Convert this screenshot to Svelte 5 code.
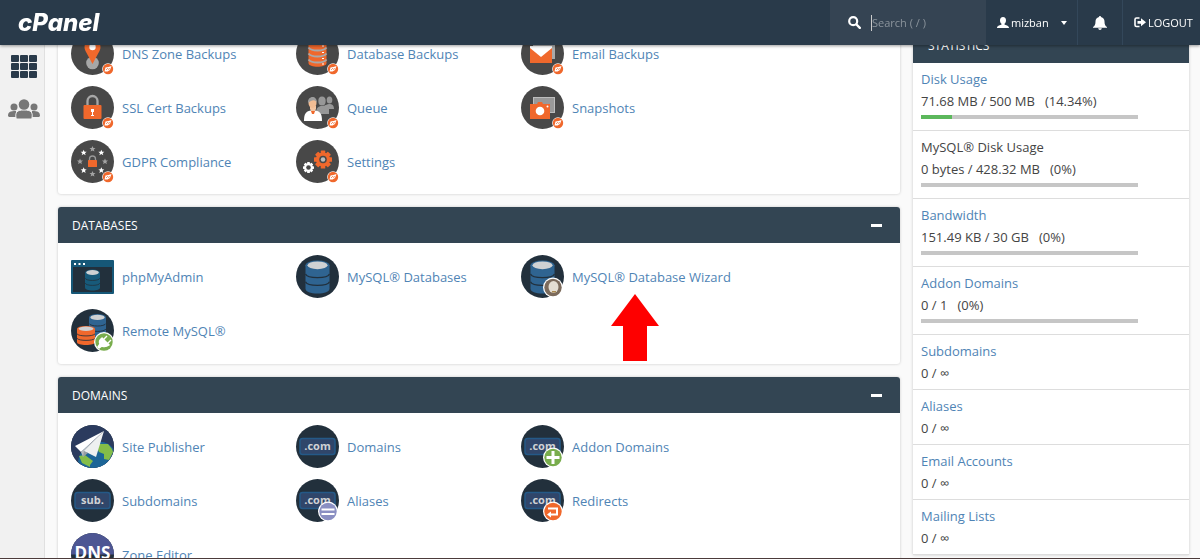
<script>
    const sections = [
        {
            title: "",
            items: [
                { label: "DNS Zone Backups", icon: "pin", jet: true },
                { label: "Database Backups", icon: "dbBackup", jet: true },
                { label: "Email Backups", icon: "mail", jet: true },
                { label: "SSL Cert Backups", icon: "lock", jet: true },
                { label: "Queue", icon: "people", jet: true },
                { label: "Snapshots", icon: "camera", jet: true },
                { label: "GDPR Compliance", icon: "gdpr", jet: true },
                { label: "Settings", icon: "gears", jet: true },
            ],
        },
        {
            title: "Databases",
            arrow: true,
            items: [
                { label: "phpMyAdmin", icon: "phpmyadmin" },
                { label: "MySQL® Databases", icon: "mysql" },
                { label: "MySQL® Database Wizard", icon: "mysql", badge: "wizard" },
                { label: "Remote MySQL®", icon: "remote" },
            ],
        },
        {
            title: "Domains",
            items: [
                { label: "Site Publisher", icon: "publisher" },
                { label: "Domains", icon: "tag", text: ".com" },
                { label: "Addon Domains", icon: "tag", text: ".com", badge: "plus" },
                { label: "Subdomains", icon: "tag", text: "sub." },
                { label: "Aliases", icon: "tag", text: ".com", badge: "equals" },
                { label: "Redirects", icon: "tag", text: ".com", badge: "redirect" },
                { label: "Zone Editor", icon: "dns" },
            ],
        },
    ];

    const stats = [
        { name: "Disk Usage", value: "71.68 MB / 500 MB", percent: 14.34 },
        { name: "MySQL® Disk Usage", value: "0 bytes / 428.32 MB", percent: 0, plain: true },
        { name: "Bandwidth", value: "151.49 KB / 30 GB", percent: 0 },
        { name: "Addon Domains", value: "0 / 1", percent: 0 },
        { name: "Subdomains", value: "0 / ∞" },
        { name: "Aliases", value: "0 / ∞" },
        { name: "Email Accounts", value: "0 / ∞" },
        { name: "Mailing Lists", value: "0 / ∞" },
    ];

    const stars = [0, 45, 90, 135, 180, 225, 270, 315];
    const teeth = [0, 45, 90, 135];

    let search = $state("");
    let collapsed = $state({});

    const toggle = (title) => {
        collapsed[title] = !collapsed[title];
    }
</script>

{#snippet cylinder(x, y, w, h, fill, line)}
    <g transform="translate({x} {y}) scale({w / 24} {h / 34})">
        <path d="M0 5v24c0 3 5 5 12 5s12-2 12-5V5z" fill={fill} />
        <ellipse cx="12" cy="5" rx="12" ry="5" fill={fill} />
        <ellipse cx="12" cy="5" rx="10" ry="4" fill="#cfd1d3" />
        <path d="M0 14c2 5 22 5 24 0M0 22c2 5 22 5 24 0" fill="none" stroke={line} stroke-width="1.3" />
    </g>
{/snippet}

{#snippet gear(x, y, r, color, hole)}
    <g transform="translate({x} {y})">
        {#each teeth as angle}
            <rect x={-r * 0.25} y={-r} width={r * 0.5} height={r * 2} rx="0.6" fill={color} transform="rotate({angle})" />
        {/each}
        <circle r={r * 0.78} fill={color} />
        <circle r={r * 0.42} fill="#484848" />
        <circle r={r * 0.25} fill={hole} />
    </g>
{/snippet}

{#snippet tile(item)}
    <svg class="tile" viewBox="0 0 43 43" aria-hidden="true">
        {#if item.jet}
            <circle cx="21.5" cy="21.5" r="21.5" fill="#484848" />
        {:else if item.icon !== "phpmyadmin"}
            <circle cx="21.5" cy="21.5" r="21.5" fill="#22303c" />
        {/if}

        {#if item.icon === "pin"}
            <circle cx="21.5" cy="31" r="6.3" fill="#a7a7a7" />
            <path d="M21.5 32l-7-13a8 8 0 1 1 14 0z" fill="#f0682c" />
            <circle cx="21.5" cy="15" r="3.2" fill="#fff" />
        {:else if item.icon === "dbBackup"}
            <path d="M12.5 10v21c0 5 18 5 18 0V10c0-4-18-4-18 0z" fill="#f0682c" />
            <path d="M12.5 15.500c3 4 15 4 18 0M12.500 21.500c3 4 15 4 18 0M12.500 27.500c3 4 15 4 18 0" fill="none" stroke="#a9a9a9" stroke-width="2" />
            <path d="M26 14h2M26 20.500h2M26 26.500h2M26 32h2" stroke="#fff" stroke-width="1.2" />
        {:else if item.icon === "mail"}
            <path d="M12 9h22v18H12z" fill="#a9a9a9" />
            <path d="M9 14h22v17H9z" fill="#f0682c" />
            <path d="M9 14h22v2l-11 9-11-9z" fill="#fff" />
        {:else if item.icon === "lock"}
            <path d="M16.500 20v-5a5 5 0 0 1 10 0v5" fill="none" stroke="#a7a7a7" stroke-width="2.300" />
            <rect x="12.500" y="19" width="18" height="14" rx="1" fill="#f0682c" />
            <path d="M20 23h3v3h-1v3h1v1h-3v-1h1v-3h-1z" fill="#fff" />
        {:else if item.icon === "people"}
            <g fill="#979797">
                <ellipse cx="26" cy="15" rx="3.700" ry="4.500" />
                <ellipse cx="33.500" cy="14" rx="2.800" ry="3.500" />
                <path d="M20 28c0-6 2-8 6-8 2 0 3-1 7-2 3 0 5 1 5 5h-5v5z" />
            </g>
            <path d="M8 35c0-8 2-10 9-11 7 1 9 3 9 11z" fill="#fff" />
            <path d="M14 23l3 5 3-5v-3h-6z" fill="#f5c6a2" />
            <ellipse cx="16.500" cy="17" rx="4" ry="5" fill="#f2bd94" />
            <path d="M12 17c-1-7 9-9 9 0-2-4-5-3-9 0z" fill="#9c9c9c" />
            <path d="M15 25h4l-1 3h-2z" fill="#f0682c" />
        {:else if item.icon === "camera"}
            <rect x="12.500" y="11.500" width="21" height="15" fill="#999" stroke="#bdbdbd" />
            <path d="M16 18l1-2h4l1 2h7v15H9V18z" fill="#f0682c" />
            <circle cx="19" cy="25" r="4.300" fill="#fff" />
            <circle cx="26.500" cy="20.500" r="1" fill="#fff" />
        {:else if item.icon === "gdpr"}
            {#each stars as angle, i}
                <path
                    d="M0-3l.9 2 2.100.1-1.700 1.400.7 2.100L0 1.400l-2 1.200.7-2.100L-3-.9-.9-1z"
                    fill={i % 2 ? "#fff" : "#a3a3a3"}
                    transform="translate(21.500 21.500) rotate({angle}) translate(0 -12.500) rotate({-angle})"
                />
            {/each}
            <path d="M18.500 21v-2a3 3 0 0 1 6 0v2" fill="none" stroke="#999" stroke-width="1.300" />
            <rect x="17" y="20" width="9" height="7" rx="0.600" fill="#f0682c" />
        {:else if item.icon === "gears"}
            {@render gear(27, 19.5, 9, "#f0682c", "#bdbdbd")}
            {@render gear(12.5, 27.5, 5.5, "#fff", "#484848")}
        {:else if item.icon === "phpmyadmin"}
            <rect y="5" width="43" height="34" rx="1" fill="#165777" />
            <path d="M2 12h39v25H2z" fill="#22303c" />
            <path d="M3 8h2v2H3zM7.500 8h2v2h-2zM12 8h2v2h-2z" fill="#fff" />
            {@render cylinder(14, 14.5, 15, 21, "#175a7a", "#22303c")}
        {:else if item.icon === "mysql"}
            {@render cylinder(9.5, 5.5, 24, 33, "#2f6491", "#22303c")}
        {:else if item.icon === "remote"}
            {@render cylinder(18, 5, 17, 23, "#2f6491", "#22303c")}
            {@render cylinder(6, 17, 18, 19, "#f0682c", "#22303c")}
            <circle cx="33" cy="33" r="10" fill="#fff" />
            <circle cx="33" cy="33" r="8.700" fill="#79ad4d" />
            <path d="M31 29l7 7c-3 2-5 2-7 1l-3 2-1-1 2-3c-1-2-1-4 2-6zM33 30l3-3M37 34l3-3" fill="#fff" stroke="#fff" stroke-width="1.400" />
        {:else if item.icon === "publisher"}
            <circle cx="21.500" cy="21.500" r="21.500" fill="#2b3b5e" />
            <path d="M7 37c1-11 10-19 20-20 6-1 12 2 15.500 7-1 10-9 19-21 19-6 0-11-3-14.500-6z" fill="#1c6597" />
            <path d="M28 19l9 0 4 5 1 3-4 8-5-1 0-5-5-2-2-4zM8 31l6-1 8 6-3 4 0 2-8-4z" fill="#84bd48" />
            <path d="M33 6L4 21l6 6z" fill="#fff" />
            <path d="M33 6L10 27l2 5z" fill="#b9bdc1" />
            <path d="M33 6L13 26l12 6z" fill="#eef0f0" />
            <path d="M12 32l1-6 4 2z" fill="#969da3" />
        {:else if item.icon === "tag"}
            <rect x="4" y="13.500" width="35" height="16" rx="2.500" fill="#30466a" stroke="#245987" stroke-width="1.500" />
            <text x="21.500" y="25" text-anchor="middle" font-size="11" font-weight="700" fill="#d0d2d5">{item.text}</text>
        {:else if item.icon === "dns"}
            <path d="M0 21.500a21.500 21.500 0 0 1 43 0z" fill="#4d5693" />
            <text x="21.500" y="26" text-anchor="middle" font-size="17" font-weight="700" fill="#fff">DNS</text>
        {/if}

        {#if item.jet}
            <circle cx="37" cy="37" r="5.800" fill="#fff" />
            <circle cx="37" cy="37" r="5.200" fill="#f0682c" />
            <path d="M33.500 39.500l1-4 3-.5 3-1-1.500 4-2.500 1.500z" fill="#fff" />
            <path d="M35 38l2-2M37.500 38l1-2" stroke="#f0682c" stroke-width="0.700" />
        {:else if item.badge}
            <circle cx="32" cy="32.500" r="10" fill="#fff" />
            {#if item.badge === "wizard"}
                <circle cx="32" cy="32.500" r="8.700" fill="#7c6b5c" />
                <ellipse cx="32.500" cy="32" rx="5" ry="6" fill="#e4ded3" />
                <path d="M31 36h4v1.500h-4z" fill="#a9884f" />
            {:else if item.badge === "plus"}
                <circle cx="32" cy="32.500" r="8.700" fill="#79ad4d" />
                <path d="M32 26v13M25.500 32.500h13" stroke="#fff" stroke-width="3" />
            {:else if item.badge === "equals"}
                <circle cx="32" cy="32.500" r="8.700" fill="#8a8fc2" />
                <path d="M25.500 30.500h13M25.500 35h13" stroke="#fff" stroke-width="2" />
            {:else}
                <circle cx="32" cy="32.500" r="8.700" fill="#f0682c" />
                <path d="M27 29.500h9v6h-7" fill="none" stroke="#fff" stroke-width="2" />
                <path d="M26 35.500l4-3v6z" fill="#fff" />
            {/if}
        {/if}
    </svg>
{/snippet}

<div class="page">
    <header class="topbar">
        <a class="logo" href="#home">cPanel</a>
        <label class="search">
            <svg width="13" height="13" viewBox="0 0 13 13" aria-hidden="true">
                <circle cx="5.200" cy="5.200" r="4" fill="none" stroke="#fff" stroke-width="2.200" />
                <path d="M8.500 8.500l3.300 3.300" stroke="#fff" stroke-width="2.400" stroke-linecap="round" />
            </svg>
            <input type="text" placeholder="Search ( / )" aria-label="Search" bind:value={search}>
        </label>
        <button class="user">
            <svg width="12" height="11" viewBox="0 0 12 11" aria-hidden="true">
                <path d="M6 0c2 0 3 1.300 3 3.200C9 5 8.300 6 7.500 6.700v.8c1 .7 4.500.8 4.500 3.500H0C0 8.300 3.500 8.200 4.500 7.500v-.8C3.700 6 3 5 3 3.200 3 1.300 4 0 6 0z" fill="#fff" />
            </svg>
            <span>mizban</span>
            <i class="caret"></i>
        </button>
        <button class="bell" aria-label="Notifications">
            <svg width="14" height="14" viewBox="0 0 14 14" aria-hidden="true">
                <path d="M7 0c.7 0 1 .5 1 1 2.500.5 3.500 2.500 3.500 4.500 0 3 .8 4.500 2.500 5.500v.8H0V11c1.700-1 2.500-2.500 2.500-5.500C2.500 3.500 3.500 1.500 6 1c0-.5.300-1 1-1zM5.200 12.300h3.600C8.600 14.500 5.400 14.500 5.200 12.300z" fill="#fff" />
            </svg>
        </button>
        <a class="logout" href="#logout">
            <svg width="12" height="11" viewBox="0 0 12 11" aria-hidden="true">
                <path d="M5.500 1H2.500Q1 1 1 2.500v5.500Q1 9.500 2.500 9.500h3" fill="none" stroke="#fff" stroke-width="1.600" />
                <path d="M3.500 4h3.500V1.300l5 4-5 4V6.700H3.500z" fill="#fff" />
            </svg>
            <span>LOGOUT</span>
        </a>
    </header>

    <div class="layout">
        <nav class="sidebar">
            <a href="#home" aria-label="Home">
                <svg width="26" height="24" viewBox="0 0 26 24" aria-hidden="true">
                    {#each [0, 9, 18] as x}
                        {#each [0, 8, 16] as y}
                            <rect x={x} y={y + 1} width="8" height="7" rx="1" fill="#293a4a" />
                        {/each}
                    {/each}
                </svg>
            </a>
            <a href="#users" aria-label="User Manager">
                <svg width="32" height="20" viewBox="0 0 32 20" fill="#777" aria-hidden="true">
                    <circle cx="6" cy="8" r="3.500" />
                    <circle cx="26" cy="8" r="3.500" />
                    <path d="M0 17c0-4 2-5 8-5v6H1zM32 17c0-4-2-5-8-5v6h7z" />
                    <path d="M8 19c-1-6 1-8 8-8s9 2 8 8q0 1-1 1H9q-1 0-1-1z" stroke="#f1f1f1" />
                    <circle cx="16" cy="5.500" r="5.300" />
                </svg>
            </a>
        </nav>

        <main>
            {#each sections as section}
                <section class="panel">
                    {#if section.title}
                        <div class="panel-head">
                            <h2>{section.title}</h2>
                            <button aria-label="Toggle {section.title}" onclick={() => toggle(section.title)}></button>
                        </div>
                    {/if}
                    {#if !collapsed[section.title]}
                        <div class="items" class:tucked={!section.title}>
                            {#each section.items as item}
                                <a class="item" href="#{item.icon}">
                                    {@render tile(item)}
                                    <span>{item.label}</span>
                                </a>
                            {/each}
                        </div>
                    {/if}
                    {#if section.arrow}
                        <svg class="arrow" width="48" height="67" viewBox="0 0 48 67" aria-hidden="true">
                            <path d="M24 0l24 32H36v35H12V32H0z" fill="#fe0000" />
                        </svg>
                    {/if}
                </section>
            {/each}
        </main>

        <aside class="stats">
            <h2>Statistics</h2>
            {#each stats as stat}
                <div class="stat">
                    {#if stat.plain}
                        <span class="name">{stat.name}</span>
                    {:else}
                        <a class="name" href="#stats">{stat.name}</a>
                    {/if}
                    <div class="value">
                        <span>{stat.value}</span>
                        {#if stat.percent !== undefined}
                            <span>({stat.percent}%)</span>
                        {/if}
                    </div>
                    {#if stat.percent !== undefined}
                        <div class="bar"><div class="fill" style="width: {stat.percent}%"></div></div>
                    {/if}
                </div>
            {/each}
        </aside>
    </div>
</div>

<style>
    :global(body) {
        background: #fafafa;
    }

    .page {
        box-sizing: border-box;
        height: 100vh;
        overflow: hidden;
        border-bottom: 1px solid #4c3b3b;
        font-family: "Open Sans", sans-serif;
        font-size: 13px;
        color: #444;
    }

    a {
        color: #4f84b5;
        text-decoration: none;
    }

    button {
        border: 0;
        padding: 0;
        background: none;
        font: inherit;
        color: inherit;
        cursor: pointer;
    }

    h2 {
        margin: 0;
        font-size: 12px;
        font-weight: 400;
        text-transform: uppercase;
        color: #fff;
    }

    /* stays over the scrolled content */
    .topbar {
        position: fixed;
        top: 0;
        left: 0;
        right: 0;
        z-index: 2;
        display: flex;
        height: 45px;
        background: #293a4a;
        box-shadow: 0 1px 3px rgba(0, 0, 0, 0.4);
        font-size: 11px;
        color: #fff;
    }

    .topbar > * {
        display: flex;
        align-items: center;
        box-sizing: border-box;
    }

    .logo {
        margin-right: auto;
        padding-left: 18px;
        font-family: Inter, sans-serif;
        font-size: 24px;
        font-style: italic;
        font-weight: 800;
        color: #fff;
    }

    .search {
        width: 156px;
        padding-left: 18px;
        gap: 10px;
        background: #354453;
    }

    .search input {
        width: 90px;
        height: 16px;
        padding: 0;
        border: 0;
        border-left: 1px solid #ccc;
        outline: 0;
        background: none;
        font: inherit;
        color: #fff;
    }

    .search input::placeholder {
        color: #8b949c;
    }

    .user {
        width: 91px;
        padding-left: 11px;
        gap: 2px;
    }

    .caret {
        margin-left: 10px;
        border: 3px solid transparent;
        border-top: 4px solid #fff;
        border-bottom: 0;
    }

    .bell {
        width: 46px;
        justify-content: center;
        border-left: 1px solid #33475a;
        border-right: 1px solid #33475a;
    }

    .logout {
        width: 77px;
        padding-left: 11px;
        gap: 2px;
        color: #fff;
    }

    .layout {
        display: flex;
        align-items: flex-start;
        gap: 13px;
        padding-right: 11px;
    }

    .sidebar {
        display: flex;
        flex-direction: column;
        align-items: center;
        align-self: stretch;
        gap: 21px;
        box-sizing: border-box;
        width: 45px;
        padding: 54px 0 0 4px;
        background: #f1f1f1;
        border-right: 1px solid #e0e0e0;
    }

    .sidebar svg {
        display: block;
    }

    main {
        flex: 1;
        display: flex;
        flex-direction: column;
        gap: 13px;
    }

    .panel {
        position: relative;
        border-radius: 3px;
        background: #fff;
        box-shadow: 0 0 3px rgba(0, 0, 0, 0.2);
    }

    .panel-head {
        display: flex;
        align-items: center;
        justify-content: space-between;
        height: 36px;
        padding: 0 18px 0 14px;
        border-radius: 3px 3px 0 0;
        background: #334553;
    }

    .panel-head button {
        width: 11px;
        height: 3px;
        background: #fff;
    }

    .items {
        display: grid;
        grid-template-columns: repeat(auto-fill, 225px);
        row-gap: 11px;
        padding: 12px 13px;
    }

    .items.tucked {
        padding-top: 32px;
        padding-bottom: 11px;
    }

    .item {
        display: flex;
        align-items: center;
        gap: 8px;
        line-height: 18px;
    }

    .tile {
        width: 43px;
        height: 43px;
    }

    .arrow {
        position: absolute;
        top: 87px;
        left: 553px;
    }

    .stats {
        width: 276px;
        background: #fff;
        box-shadow: 0 0 3px rgba(0, 0, 0, 0.2);
    }

    .stats h2 {
        padding: 37px 15px 8px;
        line-height: 18px;
        background: #334553;
    }

    .stat {
        padding: 5px 8px;
        border-bottom: 1px solid #ddd;
        line-height: 22px;
    }

    .name {
        display: block;
    }

    .value {
        display: flex;
        gap: 10px;
    }

    .bar {
        width: 217px;
        height: 4px;
        margin: 3px 0 6px;
        background: #c6c6c6;
    }

    .fill {
        height: 100%;
        background: #5cb85c;
    }
</style>
